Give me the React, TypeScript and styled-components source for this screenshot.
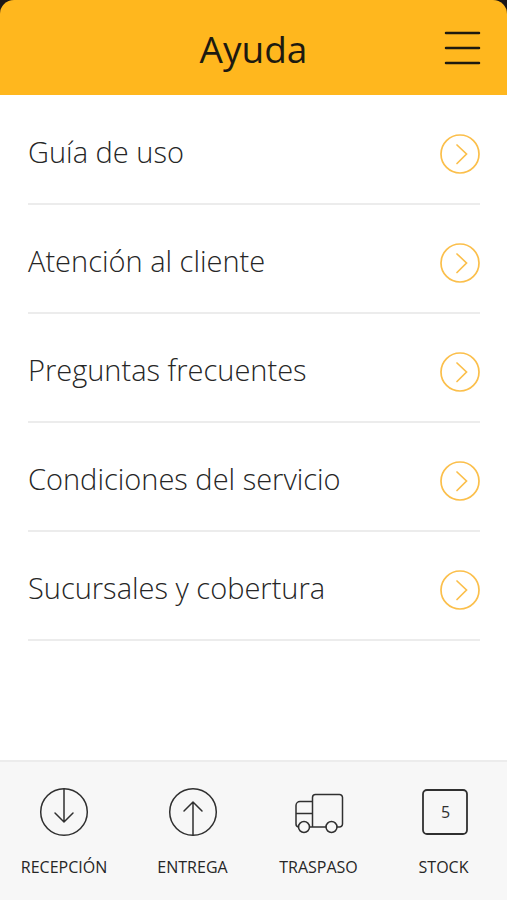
import React from "react";
import styled, { createGlobalStyle } from "styled-components";

const Global = createGlobalStyle`
  *, *::before, *::after { box-sizing: border-box; }
  html, body, #root { height: 100%; }
  body {
    margin: 0;
    background: #ffffff;
    color: #262626;
    font-family: "Open Sans", "Noto Sans", sans-serif;
  }
`;

const Screen = styled.div`
  display: flex;
  flex-direction: column;
  min-height: 100vh;
`;

const Backdrop = styled.div`
  background: #1c1616;
`;

const Header = styled.header`
  display: grid;
  grid-template-columns: 1fr auto 1fr;
  align-items: center;
  height: 95px;
  padding: 0 26px;
  background: #ffb71e;
  border-radius: 14px 14px 0 0;
`;

const Title = styled.h1`
  grid-column: 2;
  margin: 0;
  padding-top: 2px;
  font-size: 37px;
  line-height: 52px;
  font-weight: 400;
  color: #1d1a10;
`;

const MenuButton = styled.button`
  justify-self: end;
  display: flex;
  padding: 0;
  border: 0;
  background: none;
  color: #1d1a10;
  cursor: pointer;
`;

const Main = styled.main`
  flex: 1;
  padding: 1px 27px 0 28px;
`;

const List = styled.ul`
  list-style: none;
  margin: 0;
  padding: 0;
`;

const Item = styled.li`
  border-bottom: 2px solid #ececec;
`;

const ItemLink = styled.a`
  display: flex;
  align-items: center;
  justify-content: space-between;
  height: 107px;
  padding-top: 8px;
  font-size: 29px;
  line-height: 40px;
  font-weight: 300;
  color: #262626;
  text-decoration: none;
`;

const ItemLabel = styled.span`
  padding-bottom: 4px;
`;

const TabBar = styled.nav`
  display: grid;
  grid-template-columns: 128fr 129fr 123fr 127fr;
  height: 140px;
  background: #f7f7f7;
  border-top: 2px solid #ececec;
`;

const Tab = styled.a`
  display: flex;
  flex-direction: column;
  align-items: center;
  padding-top: 25px;
  gap: 18px;
  font-size: 16px;
  line-height: 24px;
  color: #262626;
  text-decoration: none;
`;

const Chevron = () => (
  <svg width="40" height="40" viewBox="0 0 40 40" fill="none" stroke="#fbbf4b" strokeWidth="1.7" strokeLinecap="round" aria-hidden="true">
    <circle cx="20" cy="20" r="19" />
    <path d="M17 11l9.500 9-9.500 9.500" />
  </svg>
);

const icon = {
  width: 50,
  height: 50,
  viewBox: "0 0 50 50",
  fill: "none",
  stroke: "#303030",
  strokeWidth: 1.5,
  strokeLinecap: "round",
  "aria-hidden": true,
} as const;

const tabs = [
  {
    label: "RECEPCIÓN",
    art: (
      <svg {...icon}>
        <circle cx="25" cy="25" r="23.300" />
        <path d="M25 2v33M16 26l9 9 9-9" />
      </svg>
    ),
  },
  {
    label: "ENTREGA",
    art: (
      <svg {...icon}>
        <circle cx="25" cy="25" r="23.300" />
        <path d="M25 48V15M16 24l9-9 9 9" />
      </svg>
    ),
  },
  {
    label: "TRASPASO",
    art: (
      <svg {...icon}>
        <path d="M18.500 40V10.500a3 3 0 0 1 3-3h24a3 3 0 0 1 3 3V37a3 3 0 0 1-3 3H43M32 40H15.500M18.500 14.500H6a4 4 0 0 0-4 4V37a3 3 0 0 0 2.500 3M2 26.500h16.500" />
        <circle cx="10" cy="40" r="5.500" />
        <circle cx="37.500" cy="40" r="5.500" />
      </svg>
    ),
  },
  {
    label: "STOCK",
    art: (
      <svg {...icon}>
        <rect x="4" y="3" width="44" height="44" rx="4" strokeWidth="1.8" />
        <text x="26.500" y="31" textAnchor="middle" fontSize="16" fill="#303030" stroke="none">5</text>
      </svg>
    ),
  },
];

const entries = ["Guía de uso", "Atención al cliente", "Preguntas frecuentes", "Condiciones del servicio", "Sucursales y cobertura"];

export default function App() {
  return (
    <Screen>
      <Global />
      <Backdrop>
        <Header>
          <Title>Ayuda</Title>
          <MenuButton type="button" aria-label="Menú">
            <svg width="37" height="36" viewBox="0 0 37 36" stroke="currentColor" strokeWidth="2.500" strokeLinecap="round" aria-hidden="true">
              <path d="M2 3h33M2 18h33M2 33h33" />
            </svg>
          </MenuButton>
        </Header>
      </Backdrop>
      <Main>
        <List>
          {entries.map((label) => (
            <Item key={label}>
              <ItemLink href="#">
                <ItemLabel>{label}</ItemLabel>
                <Chevron />
              </ItemLink>
            </Item>
          ))}
        </List>
      </Main>
      <TabBar>
        {tabs.map(({ label, art }) => (
          <Tab key={label} href="#">
            {art}
            {label}
          </Tab>
        ))}
      </TabBar>
    </Screen>
  );
}
